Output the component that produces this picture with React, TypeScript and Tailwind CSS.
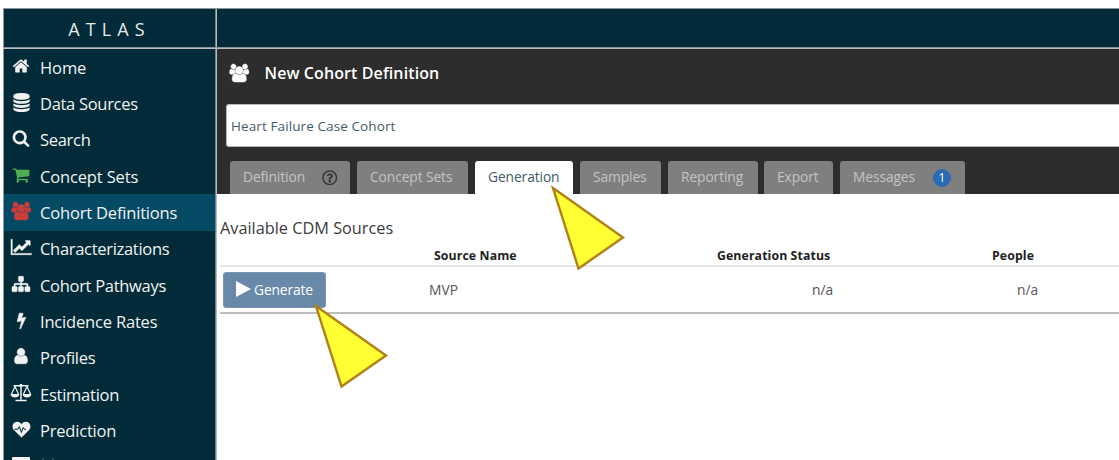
import React from "react";
import { FaRegQuestionCircle } from "react-icons/fa";

const paths = {
  home: "M1472 992v480q0 26-19 45t-45 19h-384v-384H768v384H384q-26 0-45-19t-19-45V992q0-1 .5-3t.5-3l575-474 575 474q1 2 1 6zm223-69l-62 74q-8 9-21 11h-3q-13 0-21-7L896 424l-692 577q-12 8-24 7-13-2-21-11l-62-74q-8-10-7-23.5t11-21.5l719-599q32-26 76-26t76 26l244 204V288q0-14 9-23t23-9h192q14 0 23 9t9 23v408l219 182q10 8 11 21.5t-7 23.5z",
  database: "M896 768q237 0 443-43t325-127v170q0 69-103 128t-280 93.5-385 34.5-385-34.5T231 896 128 768V598q119 84 325 127t443 43zm0 768q237 0 443-43t325-127v170q0 69-103 128t-280 93.5-385 34.5-385-34.5-280-93.5-103-128v-170q119 84 325 127t443 43zm0-384q237 0 443-43t325-127v170q0 69-103 128t-280 93.5-385 34.5-385-34.5-280-93.5-103-128V982q119 84 325 127t443 43zM896 0q208 0 385 34.5t280 93.5 103 128v128q0 69-103 128t-280 93.5T896 640t-385-34.5T231 512 128 384V256q0-69 103-128t280-93.5T896 0z",
  search: "M1216 832q0-185-131.5-316.5T768 384 451.5 515.5 320 832t131.5 316.5T768 1280t316.5-131.5T1216 832zm512 832q0 52-38 90t-90 38q-54 0-90-38l-343-342q-179 124-399 124-143 0-273.5-55.5t-225-150-150-225T64 832t55.5-273.5 150-225 225-150T768 128t273.5 55.5 225 150 150 225T1472 832q0 220-124 399l343 343q37 37 37 90z",
  cart: "M704 1536q0 52-38 90t-90 38-90-38-38-90 38-90 90-38 90 38 38 90zm896 0q0 52-38 90t-90 38-90-38-38-90 38-90 90-38 90 38 38 90zm128-1088v512q0 24-16.5 42.5T1671 1024L627 1146q13 60 13 70 0 16-24 64h920q26 0 45 19t19 45-19 45-45 19H512q-26 0-45-19t-19-45q0-11 8-31.5t16-36 21.5-40T509 1207L332 384H128q-26 0-45-19t-19-45 19-45 45-19h256q16 0 28.5 6.5T432 278t13 24.5 8 29.5 5.5 30 4.5 22h1201q26 0 45 19t19 45z",
  users: "M657 896q-162 5-265 128H258q-82 0-138-40.5T64 865q0-353 124-353 6 0 43.5 21t97.5 42.5T448 597q67 0 133-23-5 37-5 66 0 139 81 256zm1071 637q0 120-73 189.5t-194 69.5H587q-121 0-194-69.5T320 1533q0-53 3.5-103.5t14-109T364 1212t43-97.5 62-81 85.5-53.5T666 960q10 0 43 21.5t73 48 107 48 135 21.5 135-21.5 107-48 73-48 43-21.5q61 0 111.5 20t85.5 53.5 62 81 43 97.5 26.5 108.5 14 109 3.5 103.5zM704 256q0 106-75 181t-181 75-181-75-75-181 75-181T448 0t181 75 75 181zm704 384q0 159-112.5 271.5T1024 1024 752.5 911.5 640 640t112.5-271.5T1024 256t271.5 112.5T1408 640zm576 225q0 78-56 118.5t-138 40.5h-134q-103-123-265-128 81-117 81-256 0-29-5-66 66 23 133 23 59 0 119-21.5t97.5-42.5 43.5-21q124 0 124 353zm-128-609q0 106-75 181t-181 75-181-75-75-181 75-181 181-75 181 75 75 181z",
  chart: "M2048 1536v128H0V128h128v1408h1920zM1920 288v435q0 21-19.5 29.5T1865 745l-121-121-633 633q-10 10-23 10t-23-10L832 1024l-416 416-192-192 585-585q10-10 23-10t23 10l233 233 464-464-121-121q-16-16-7.5-35.5T1453 256h435q14 0 23 9t9 23z",
  sitemap: "M1792 1248v320q0 40-28 68t-68 28h-320q-40 0-68-28t-28-68v-320q0-40 28-68t68-28h96V960H960v192h96q40 0 68 28t28 68v320q0 40-28 68t-68 28H736q-40 0-68-28t-28-68v-320q0-40 28-68t68-28h96V960H320v192h96q40 0 68 28t28 68v320q0 40-28 68t-68 28H96q-40 0-68-28t-28-68v-320q0-40 28-68t68-28h96V960q0-52 38-90t90-38h512V640h-96q-40 0-68-28t-28-68V224q0-40 28-68t68-28h320q40 0 68 28t28 68v320q0 40-28 68t-68 28h-96v192h512q52 0 90 38t38 90v192h96q40 0 68 28t28 68z",
  bolt: "M1333 566q18 20 7 44l-540 1157q-13 25-42 25-4 0-14-2-17-5-25.5-19t-4.5-30l197-808-406 101q-4 1-12 1-18 0-31-11-18-15-13-39l201-825q4-14 16-23t28-9h328q19 0 32 12.5t13 29.5q0 8-5 18L891 651l396-98q8-2 12-2 19 0 34 15z",
  user: "M1536 1399q0 109-62.5 187t-150.5 78H469q-88 0-150.5-78T256 1399q0-85 8.5-160.5t31.5-152 58.5-131 94-89T583 832q131 128 313 128t313-128q76 0 134.5 34.5t94 89 58.5 131 31.5 152 8.5 160.5zm-256-887q0 159-112.5 271.5T896 896 624.5 783.5 512 512t112.5-271.5T896 128t271.5 112.5T1280 512z",
};

function Glyph({ name, wide = false, className }: { name: keyof typeof paths; wide?: boolean; className: string }) {
  return (
    <svg viewBox={wide ? "0 0 2048 1792" : "0 0 1792 1792"} className={`overflow-visible ${className}`} fill="currentColor">
      <path d={paths[name]} />
    </svg>
  );
}

function Scale() {
  return (
    <svg viewBox="0 0 22 19" className="h-[19px] w-[22px]" fill="none" stroke="currentColor" strokeWidth="1.5" strokeLinejoin="round">
      <path d="M3.5 2.8H18.500M11 1V16.500M5.500 17.500H16.500" />
      <path d="M5 3.500 1.300 11.500H8.700ZM17 3.500 13.300 11.500H20.700Z" strokeWidth="1.200" />
      <path d="M.6 11.500H9.400Q8.600 14.500 5 14.500T.6 11.500ZM12.600 11.500H21.400Q20.600 14.500 17 14.500T12.600 11.500Z" fill="currentColor" stroke="none" />
      <circle cx="11" cy="2.300" r="1.600" fill="currentColor" stroke="none" />
    </svg>
  );
}

function Heart() {
  return (
    <svg viewBox="0 0 19 17" className="h-[17px] w-[19px]" fill="none">
      <path d="M9.500 16.500 1.900 9C-.4 6.500.1 1 5 .8 7.300.7 8.700 2.200 9.500 3.200 10.300 2.200 11.700.7 14 .8 18.900 1 19.400 6.500 17.100 9Z" fill="currentColor" />
      <path d="M2.500 8.300H6L7.300 5.500 9.400 11.500 11.200 6.500 12.300 8.300H14" stroke="#012b39" strokeWidth="1" strokeLinejoin="round" />
    </svg>
  );
}

const nav = [
  { label: "Home", icon: <Glyph name="home" className="size-[18px]" />, tracking: "tracking-[-0.1px]" },
  { label: "Data Sources", icon: <Glyph name="database" className="size-[19px]" />, tracking: "tracking-[-0.3px]" },
  { label: "Search", icon: <Glyph name="search" className="size-[18px]" />, tracking: "tracking-[-0.3px]" },
  { label: "Concept Sets", icon: <Glyph name="cart" className="size-[18px] text-[#4caf50]" />, tracking: "tracking-[-0.15px]" },
  { label: "Cohort Definitions", icon: <Glyph name="users" wide className="h-[18px] w-[20.5px] stroke-current stroke-[50px] text-[#cb3d3b]" />, tracking: "tracking-[-0.18px]" },
  { label: "Characterizations", icon: <Glyph name="chart" wide className="h-[18px] w-[20.5px] stroke-current stroke-[50px]" />, tracking: "tracking-[-0.3px]" },
  { label: "Cohort Pathways", icon: <Glyph name="sitemap" className="size-[18px] stroke-current stroke-[50px]" />, tracking: "tracking-[-0.3px]" },
  { label: "Incidence Rates", icon: <Glyph name="bolt" className="size-[17px] stroke-current stroke-[60px]" />, tracking: "tracking-[-0.18px]" },
  { label: "Profiles", icon: <Glyph name="user" className="size-[18px] stroke-current stroke-[60px]" />, tracking: "tracking-[-0.3px]" },
  { label: "Estimation", icon: <Scale />, tracking: "tracking-[-0.25px]" },
  { label: "Prediction", icon: <Heart />, tracking: "tracking-[-0.2px]" },
];

const tabs = [
  { label: "Definition", box: "w-[120px] mr-[7px]" },
  { label: "Concept Sets", box: "w-[111px] mr-[7px]" },
  { label: "Generation", box: "w-[98px] mr-[7px]" },
  { label: "Samples", box: "w-[81px] mr-[7px]" },
  { label: "Reporting", box: "w-[90px] mr-[6px]" },
  { label: "Export", box: "w-[69px] mr-[7px]" },
  { label: "Messages", box: "w-[125px]" },
];

function Pointer({ className }: { className: string }) {
  return (
    <svg viewBox="0 0 76 90" className={`absolute h-[90px] w-[76px] ${className}`}>
      <path d="M3 4 73 53.5 28.5 84.5Z" fill="#ffff33" stroke="#b18119" strokeWidth="2.4" />
    </svg>
  );
}

export default function App() {
  return (
    <div className="relative flex h-[460px] w-[1119px] flex-col overflow-hidden bg-white pt-[8px] pl-[3px] font-['Open_Sans','Noto_Sans',sans-serif] whitespace-nowrap">
      <header className="flex h-[39px] shrink-0 border-t border-l border-[#8a979d] bg-[#012b39]">
        <div className="flex w-[211px] items-center justify-center pt-[3px] text-[18px] font-medium tracking-[6.100px] text-[#e8e8e8]">
          <span>ATLAS</span>
        </div>
        <div className="w-[2px] border-l border-[#748087] bg-[#b9bbbc]" />
      </header>
      <div className="h-[2px] shrink-0 border-t border-[#89929a] bg-[#b9bbbc]" />
      <div className="flex min-h-0 grow">
        <aside className="flex w-[212px] shrink-0 flex-col border-l border-[#8a979d] bg-[#012b39] text-[#f2f2f2]">
          {nav.map((item, i) => (
            <a key={item.label} className={`flex h-[36.35px] shrink-0 items-center ${i === 4 ? "bg-[#044a65]" : ""}`}>
              <span className="flex w-[34px] shrink-0 justify-center pb-[3px]">{item.icon}</span>
              <span className={`pt-px pl-[2px] text-[16.5px] leading-[24px] ${item.tracking}`}>{item.label}</span>
            </a>
          ))}
          <div className="flex shrink-0 pt-[8px] pl-[8px]">
            <span className="h-[8px] w-[18px] rounded-[1px] bg-[#f2f2f2]" />
            <span className="mt-px ml-[12px] h-[4px] w-[2px] bg-[#35545f]" />
            <span className="mt-px ml-[8px] h-[4px] w-[2px] bg-[#35545f]" />
          </div>
        </aside>
        <div className="w-[2px] shrink-0 border-l border-[#748087] bg-[#b9bbbc]" />
        <main className="min-w-0 grow">
          <section className="flex h-[145px] flex-col bg-[#2d2d2d] pt-[1px]">
            <div className="flex h-[46px] items-center pl-[12px] text-white">
              <Glyph name="users" wide className="h-[18px] w-[20.5px] stroke-current stroke-[50px]" />
              <h1 className="pl-[15px] text-[16px] font-semibold tracking-[0.1px]">New Cohort Definition</h1>
            </div>
            <div className="mt-[8px] ml-[9px] flex h-[43px] shrink-0 items-center rounded-l-[3px] border border-r-0 border-[#b8b8b8] bg-white pt-[2px] pl-[4px] text-[13.5px] tracking-[0.1px] text-[#445c66]">
              Heart Failure Case Cohort
            </div>
            <nav className="mt-auto flex pl-[13px] text-[13.8px] tracking-[-0.1px]">
              {tabs.map((tab, i) => (
                <div
                  key={tab.label}
                  className={`flex h-[33px] items-center rounded-t-[3px] pl-[13px] ${tab.box} ${i === 2 ? "bg-white text-[#445c66]" : "bg-[#7f7f7f] text-[#c4c4c4]"}`}
                >
                  {tab.label}
                  {i === 0 && <FaRegQuestionCircle className="mr-[13px] ml-auto size-[15.5px] text-[#353535]" />}
                  {i === 6 && (
                    <span className="mr-[14px] ml-auto flex size-[18px] items-center justify-center rounded-full bg-[#2a6cb2] text-[12px] text-white">1</span>
                  )}
                </div>
              ))}
            </nav>
          </section>
          <h2 className="mt-[23px] ml-[3px] text-[16.3px] leading-[22px] tracking-[0px] text-[#3b3b3b]">Available CDM Sources</h2>
          <div className="ml-[3px] grid h-[28px] grid-cols-[214px_283px_275px_1fr] border-b-2 border-[#e5e5e5] pt-[6px] text-[12.3px] leading-[22px] font-bold tracking-[0.1px] text-[#222]">
            <span />
            <span>Source Name</span>
            <span>Generation Status</span>
            <span>People</span>
          </div>
          <div className="ml-[3px] grid h-[47px] grid-cols-[209px_383px_205px_1fr] items-center border-b-2 border-[#bdbdbd] pt-px text-[13.8px] text-[#555]">
            <button className="ml-[3px] flex h-[36px] w-[103px] items-center rounded-[3px] border border-[#7996b1] bg-[#6889a9] pl-[12px] text-[13.8px] tracking-[-0.15px] text-white">
              <svg viewBox="0 0 15 16" className="mr-[3px] h-[16px] w-[15px] -translate-y-px" fill="currentColor">
                <path d="M0 0 15 8 0 16Z" />
              </svg>
              Generate
            </button>
            <span>MVP</span>
            <span>n/a</span>
            <span>n/a</span>
          </div>
        </main>
      </div>
      <Pointer className="top-[184px] left-[550px]" />
      <Pointer className="top-[302px] left-[313px]" />
    </div>
  );
}
